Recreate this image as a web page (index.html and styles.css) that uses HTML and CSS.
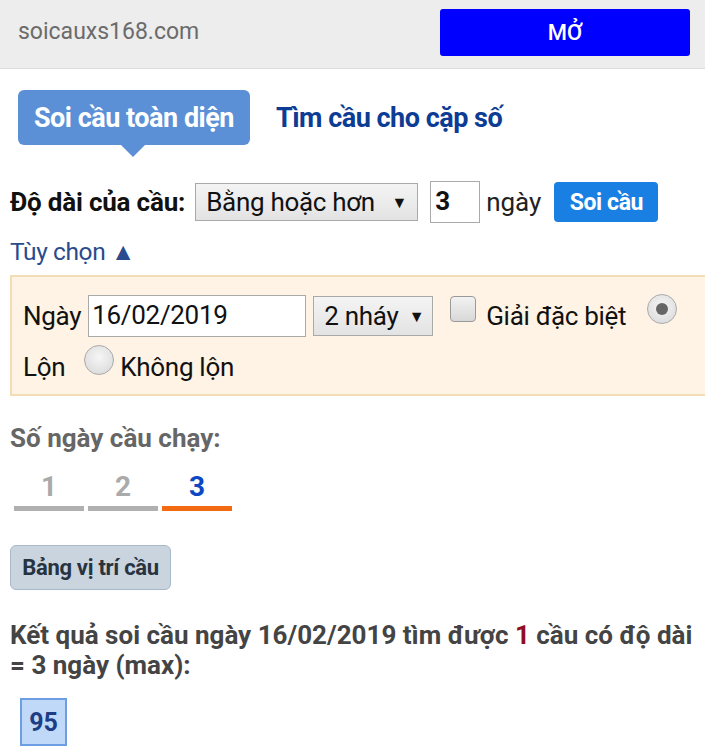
FILE: index.html
```html
<!DOCTYPE html>
<html lang="vi">
<head>
<meta charset="utf-8">
<link rel="stylesheet" href="styles.css">
</head>
<body>
<header class="topbar">
  <span class="site">soicauxs168.com</span>
  <button class="open-btn">MỞ</button>
</header>
<main class="content">
  <nav class="tabs">
    <span class="tab active">Soi cầu toàn diện</span>
    <span class="tab">Tìm cầu cho cặp số</span>
  </nav>
  <div class="length-row">
    <span class="label">Độ dài của cầu:</span>
    <span class="select wide">Bằng hoặc hơn <span class="caret">▼</span></span>
    <span class="num-input">3</span>
    <span class="unit">ngày</span>
    <button class="soi-btn">Soi cầu</button>
  </div>
  <div class="options-toggle">Tùy chọn ▲</div>
  <div class="options">
    <div class="opt-line">
      <span>Ngày</span>
      <span class="date-input">16/02/2019</span>
      <span class="select small">2 nháy <span class="caret">▼</span></span>
      <span class="checkbox"></span>
      <span>Giải đặc biệt</span>
      <span class="radio checked"></span>
    </div>
    <div class="opt-line">
      <span>Lộn</span>
      <span class="radio"></span>
      <span class="tight">Không lộn</span>
    </div>
  </div>
  <h3 class="runs-title">Số ngày cầu chạy:</h3>
  <div class="runs">
    <span class="run">1</span>
    <span class="run">2</span>
    <span class="run current">3</span>
  </div>
  <button class="table-btn">Bảng vị trí cầu</button>
  <p class="result">Kết quả soi cầu ngày 16/02/2019 tìm được <span class="count">1</span> cầu có độ dài = 3 ngày (max):</p>
  <div class="pairs"><span class="pair">95</span></div>
</main>
</body>
</html>
```
FILE: styles.css
```css
html, body { margin: 0; padding: 0; background: #fff; }
body { font-family: Roboto, "Noto Sans", sans-serif; width: 705px; overflow: hidden; }
.topbar {
  height: 69px; background: #ededed; border-bottom: 1px solid #dcdcdc;
  display: flex; align-items: center; justify-content: space-between;
  padding: 0 15px 0 18px; box-sizing: border-box;
}
.site { color: #6b6b6b; font-size: 23px; margin-top: -5px; }
.open-btn {
  width: 250px; height: 47px; background: #0000ff; color: #fff; border: 0; border-radius: 3px;
  font: 500 22px Roboto, sans-serif; margin-top: -4px;
}
.content { padding: 0 0 0 10px; }
.tabs { display: flex; align-items: center; gap: 26px; margin: 21px 0 0 8px; height: 55px; }
.tab { font-weight: 700; font-size: 27px; letter-spacing: -0.5px; color: #0c3c94; }
.tab.active {
  position: relative; background: #5b90d7; color: #fff; border-radius: 6px;
  height: 55px; padding: 0 16px; display: flex; align-items: center;
}
.tab.active::after {
  content: ""; position: absolute; left: 103px; bottom: -12px;
  border-left: 12px solid transparent; border-right: 12px solid transparent; border-top: 12px solid #5b90d7;
}
.length-row { display: flex; align-items: center; margin-top: 36px; height: 42px; font-size: 26px; }
.label { font-weight: 700; letter-spacing: -0.2px; margin-right: 10px; color: #111; }
.select {
  display: inline-flex; align-items: center; justify-content: space-between; box-sizing: border-box;
  background: linear-gradient(#f4f4f4, #e3e3e3); border: 1px solid #a9a9a9; color: #111;
  letter-spacing: -0.3px;
}
.select.wide { width: 223px; height: 38px; padding: 0 10px; }
.caret { font-size: 16px; }
.num-input {
  width: 50px; height: 42px; box-sizing: border-box; border: 1px solid #aaa; background: #fff;
  margin-left: 12px; font-weight: 700; padding: 4px 0 0 4px; color: #111;
}
.unit { margin-left: 6px; color: #222; }
.soi-btn {
  margin-left: 13px; width: 104px; height: 40px; border: 0; border-radius: 4px;
  background: #1a7fe3; color: #fff; font: 700 23px Roboto, sans-serif; letter-spacing: -0.4px;
}
.options-toggle { margin-top: 14px; color: #2a4b8d; font-size: 24.5px; letter-spacing: -0.4px; height: 30px; }
.options {
  margin-top: 8px; background: #fef3e4; border: 2px solid #f2ddb5; border-right: 0;
  padding: 18px 0 6px 11px; font-size: 26px; color: #111; letter-spacing: -0.3px;
}
.opt-line { display: flex; align-items: center; height: 42px; gap: 7px; }
.opt-line + .opt-line { margin-top: 9px; }
.date-input {
  width: 218px; height: 42px; box-sizing: border-box; border: 1px solid #aaa; background: #fff;
  padding: 4px 0 0 3px;
}
.select.small { width: 120px; height: 40px; padding: 0 8px 0 10px; }
.checkbox {
  width: 26px; height: 26px; box-sizing: border-box; border: 1px solid #9a9a9a; border-radius: 4px;
  background: linear-gradient(#f2f2f2, #d8d8d8); margin: -14px 3px 0 10px;
}
.radio {
  width: 30px; height: 30px; box-sizing: border-box; border-radius: 50%; border: 1px solid #aaa;
  background: radial-gradient(circle at 50% 40%, #f6f6f6, #d6d6d6); margin: -14px 0 0 12px;
  display: inline-flex; align-items: center; justify-content: center;
}
.opt-line .radio.checked { margin-left: 14px; }
.radio.checked::after { content: ""; width: 12px; height: 12px; border-radius: 50%; background: #666; }
.tight { margin-left: -1px; }
.runs-title { margin: 27px 0 0; font-size: 26px; font-weight: 700; color: #666; height: 30px; line-height: 30px; }
.runs { display: flex; gap: 4px; margin: 17px 0 0 4px; }
.run {
  width: 70px; text-align: center; font-weight: 700; font-size: 28px; color: #aaa;
  border-bottom: 5px solid #b0b0b0; padding-bottom: 3px; line-height: 33px;
}
.run.current { color: #0c48c4; border-bottom-color: #f26b12; }
.table-btn {
  margin-top: 34px; height: 45px; width: 161px; border: 1px solid #a9b9c9; border-radius: 6px;
  background: #c9d4df; color: #273340; font: 700 22px Roboto, sans-serif; letter-spacing: -0.3px; padding: 0;
}
.result {
  margin: 30px 0 0; font-size: 26px; font-weight: 700; color: #444; line-height: 30px;
  padding-right: 8px;
}
.count { color: #8e0e22; }
.pairs { margin: 18px 0 0 10px; }
.pair {
  display: inline-flex; align-items: center; justify-content: center; width: 47px; height: 48px;
  box-sizing: border-box; background: #c1d9f8; border: 2px solid #6d9ee4; color: #1d3d85;
  font-weight: 700; font-size: 25px;
}
```
